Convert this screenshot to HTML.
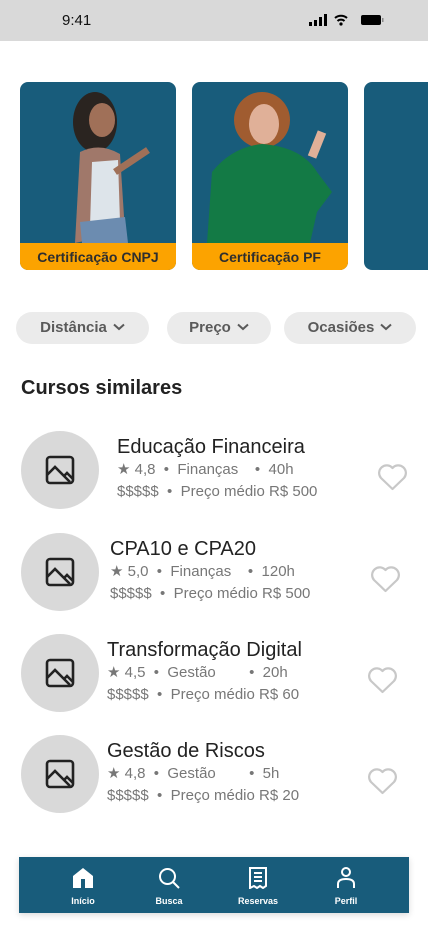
<!DOCTYPE html><html><head><meta charset="utf-8"><style>
*{margin:0;padding:0;box-sizing:border-box}
body{width:428px;height:926px;overflow:hidden;background:#fff;font-family:"Liberation Sans",sans-serif;position:relative}
.sb{position:absolute;left:0;top:0;width:428px;height:41px;background:#d9d9d9}
.card{position:absolute;top:82px;width:156px;height:188px;background:#185c7b;border-radius:8px;overflow:hidden}
.lab{position:absolute;left:0;bottom:0;width:100%;height:27px;background:#fca300;color:#2e2e2e;font-weight:bold;font-size:14px;text-align:center;line-height:28px}
.chip{position:absolute;top:312px;height:32px;background:#ebebeb;border-radius:16px;color:#5a5a5a;font-size:15px;font-weight:bold;text-align:center;line-height:32px}
.chip svg{vertical-align:middle;margin-left:6px;margin-top:-3px}
.circ{position:absolute;left:21px;width:78px;height:78px;border-radius:50%;background:#d9d9d9}
.circ svg{position:absolute;left:23px;top:23px}
.t{position:absolute;font-size:20px;color:#222}
.m{position:absolute;font-size:15px;color:#777;white-space:pre}
.h{position:absolute}
.nav{position:absolute;left:19px;top:857px;width:390px;height:56px;background:#185c7b;box-shadow:0 2px 6px rgba(0,0,0,.15)}
.ni{position:absolute;top:0;width:80px;text-align:center;color:#fff;font-size:9px;font-weight:bold}
.ni svg{display:block;margin:10px auto 7px}
</style></head><body>
<div class="sb"></div>
<div style="position:absolute;left:62px;top:12px;font-size:15px;color:#111">9:41</div>
<svg style="position:absolute;left:309px;top:14px" width="76" height="12"><rect x="0" y="8" width="3" height="4" fill="#000"/><rect x="5" y="6" width="3" height="6" fill="#000"/><rect x="10" y="3" width="3" height="9" fill="#000"/><rect x="15" y="0" width="3" height="12" fill="#000"/><path d="M26 4a9 9 0 0 1 12 0M28.5 7a5 5 0 0 1 7 0" stroke="#000" stroke-width="2" fill="none"/><circle cx="32" cy="10" r="1.6"/><rect x="52" y="1" width="20" height="10" rx="2" fill="#000"/><rect x="73" y="4" width="1.5" height="4" fill="#888"/></svg>
<div class="card" style="left:20px"><svg width="156" height="161"><ellipse cx="75" cy="40" rx="22" ry="30" fill="#2a2420"/><ellipse cx="82" cy="38" rx="13" ry="17" fill="#a07058"/><path d="M60 70 Q80 60 100 72 L105 150 L55 161 Z" fill="#a0786a"/><path d="M72 80 L98 78 L100 140 L70 145 Z" fill="#dde4ea"/><path d="M60 140 L105 135 L108 161 L62 161Z" fill="#6c8cb0"/><path d="M95 90 L128 68" stroke="#a07058" stroke-width="7"/></svg><div class="lab">Certificação CNPJ</div></div>
<div class="card" style="left:192px"><svg width="156" height="161"><ellipse cx="70" cy="38" rx="28" ry="28" fill="#a05c30"/><ellipse cx="72" cy="42" rx="15" ry="20" fill="#e0b098"/><path d="M15 161 L20 90 Q40 65 70 62 Q110 65 125 90 L140 110 L125 130 L118 161Z" fill="#137a45"/><path d="M120 75 L130 50" stroke="#e0b098" stroke-width="9"/></svg><div class="lab">Certificação PF</div></div>
<div class="card" style="left:364px"></div>
<div class="chip" style="left:16px;width:133px">Distância<svg width="12" height="8"><path d="M1 1.5 L6 6 L11 1.5" stroke="#5a5a5a" stroke-width="2" fill="none"/></svg></div>
<div class="chip" style="left:167px;width:104px">Preço<svg width="12" height="8"><path d="M1 1.5 L6 6 L11 1.5" stroke="#5a5a5a" stroke-width="2" fill="none"/></svg></div>
<div class="chip" style="left:284px;width:132px">Ocasiões<svg width="12" height="8"><path d="M1 1.5 L6 6 L11 1.5" stroke="#5a5a5a" stroke-width="2" fill="none"/></svg></div>
<div style="position:absolute;left:21px;top:377px;font-size:20px;font-weight:bold;color:#222">Cursos similares</div>

<div class="circ" style="top:431px"><svg width="32" height="32" viewBox="0 0 32 32" fill="none" stroke="#222" stroke-width="2.6"><rect x="3" y="3" width="26" height="26" rx="3"/><path d="M3 21 L11 13 L26 28"/><path d="M20 22 L23 19 L29 25"/></svg></div>
<div class="t" style="left:117px;top:436px">Educação Financeira</div>
<div class="m" style="left:117px;top:460px">★ 4,8  •  Finanças    •  40h</div>
<div class="m" style="left:117px;top:483px">$$$$$  •  Preço médio R$ 500</div>
<svg class="h" style="left:377px;top:463px" width="31" height="28" viewBox="0 0 31 28"><path d="M15.5 26 L4 15 A7 7 0 0 1 15.5 5 A7 7 0 0 1 27 15 Z" fill="none" stroke="#c8c8c8" stroke-width="2.2" stroke-linejoin="round"/></svg>

<div class="circ" style="top:533px"><svg width="32" height="32" viewBox="0 0 32 32" fill="none" stroke="#222" stroke-width="2.6"><rect x="3" y="3" width="26" height="26" rx="3"/><path d="M3 21 L11 13 L26 28"/><path d="M20 22 L23 19 L29 25"/></svg></div>
<div class="t" style="left:110px;top:538px">CPA10 e CPA20</div>
<div class="m" style="left:110px;top:562px">★ 5,0  •  Finanças    •  120h</div>
<div class="m" style="left:110px;top:585px">$$$$$  •  Preço médio R$ 500</div>
<svg class="h" style="left:370px;top:565px" width="31" height="28" viewBox="0 0 31 28"><path d="M15.5 26 L4 15 A7 7 0 0 1 15.5 5 A7 7 0 0 1 27 15 Z" fill="none" stroke="#c8c8c8" stroke-width="2.2" stroke-linejoin="round"/></svg>

<div class="circ" style="top:634px"><svg width="32" height="32" viewBox="0 0 32 32" fill="none" stroke="#222" stroke-width="2.6"><rect x="3" y="3" width="26" height="26" rx="3"/><path d="M3 21 L11 13 L26 28"/><path d="M20 22 L23 19 L29 25"/></svg></div>
<div class="t" style="left:107px;top:639px">Transformação Digital</div>
<div class="m" style="left:107px;top:663px">★ 4,5  •  Gestão        •  20h</div>
<div class="m" style="left:107px;top:686px">$$$$$  •  Preço médio R$ 60</div>
<svg class="h" style="left:367px;top:666px" width="31" height="28" viewBox="0 0 31 28"><path d="M15.5 26 L4 15 A7 7 0 0 1 15.5 5 A7 7 0 0 1 27 15 Z" fill="none" stroke="#c8c8c8" stroke-width="2.2" stroke-linejoin="round"/></svg>

<div class="circ" style="top:735px"><svg width="32" height="32" viewBox="0 0 32 32" fill="none" stroke="#222" stroke-width="2.6"><rect x="3" y="3" width="26" height="26" rx="3"/><path d="M3 21 L11 13 L26 28"/><path d="M20 22 L23 19 L29 25"/></svg></div>
<div class="t" style="left:107px;top:740px">Gestão de Riscos</div>
<div class="m" style="left:107px;top:764px">★ 4,8  •  Gestão        •  5h</div>
<div class="m" style="left:107px;top:787px">$$$$$  •  Preço médio R$ 20</div>
<svg class="h" style="left:367px;top:767px" width="31" height="28" viewBox="0 0 31 28"><path d="M15.5 26 L4 15 A7 7 0 0 1 15.5 5 A7 7 0 0 1 27 15 Z" fill="none" stroke="#c8c8c8" stroke-width="2.2" stroke-linejoin="round"/></svg>

<div class="nav">
<div class="ni" style="left:24px"><svg width="22" height="22" viewBox="0 0 22 22"><path d="M1 9 L11 1 L21 9 V21 H1Z" fill="#fff"/><rect x="9" y="12" width="4" height="9" fill="#185c7b"/></svg>Início</div>
<div class="ni" style="left:110px"><svg width="22" height="22" viewBox="0 0 22 22" fill="none" stroke="#fff" stroke-width="2"><circle cx="9.5" cy="9.5" r="7.5"/><path d="M15 15 L21 21"/></svg>Busca</div>
<div class="ni" style="left:199px"><svg width="22" height="22" viewBox="0 0 22 22" fill="none" stroke="#fff" stroke-width="2"><path d="M3 1 H19 V19 L16 21 L13 19 L10 21 L7 19 L3 21 Z"/><path d="M7 6H15M7 10H15M7 14H15"/></svg>Reservas</div>
<div class="ni" style="left:287px"><svg width="22" height="22" viewBox="0 0 22 22" fill="none" stroke="#fff" stroke-width="2"><circle cx="11" cy="5" r="4"/><path d="M3 21 V17 Q3 12 11 12 Q19 12 19 17 V21"/></svg>Perfil</div>
</div>
</body></html>
